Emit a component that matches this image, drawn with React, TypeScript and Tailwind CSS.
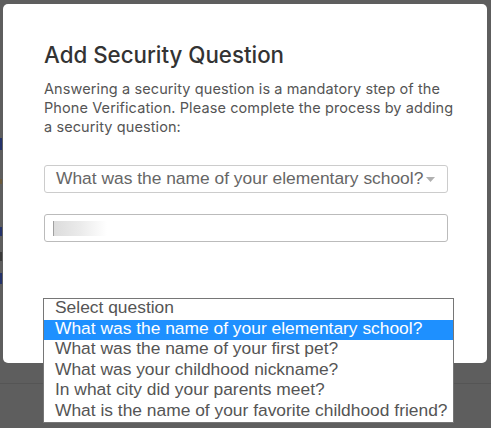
import React from "react";

const options = [
  "Select question",
  "What was the name of your elementary school?",
  "What was the name of your first pet?",
  "What was your childhood nickname?",
  "In what city did your parents meet?",
  "What is the name of your favorite childhood friend?",
];

export default function App() {
  return (
    <div className="relative w-[491px] h-[428px] overflow-hidden bg-[#5e5e5e] flex flex-col">
      <div className="flex pt-[4px]">
        {/* slivers of page content behind the overlay */}
        <div className="w-[3px] flex flex-col">
          <div className="mt-[134px] w-[2px] h-[12px] bg-[#25336a]" />
          <div className="mt-[29px] w-[2px] h-[5px] bg-[#6b5a3a]" />
          <div className="mt-[43px] w-[2px] h-[9px] bg-[#25336a]" />
          <div className="mt-[16px] w-[2px] h-[9px] bg-[#3a3a3a]" />
          <div className="mt-[12px] w-[2px] h-[11px] bg-[#25336a]" />
        </div>
        <div className="w-[484px] bg-white rounded-[5px] h-[359px] pl-[41px] pr-[40px] pt-[37px] font-['Inter',sans-serif]">
          <h2 className="text-[22.3px] leading-[28px] text-[#333333] font-medium">
            Add Security Question
          </h2>
          <p className="mt-[10px] text-[14.5px] leading-[19px] text-[#555555] whitespace-nowrap tracking-[0.1px]">
            Answering a security question is a mandatory step of the
            <br />
            Phone Verification. Please complete the process by adding
            <br />
            a security question:
          </p>

          <div className="mt-[29px] relative h-[28px] w-[404px] border border-[#cccccc] rounded-[3px] flex items-center pl-[11px] pb-[1px] font-['Liberation_Sans',Arial,sans-serif] text-[17.4px] text-[#666666] whitespace-nowrap">
            What was the name of your elementary school?
            <svg
              className="absolute right-[12px] top-[11px]"
              width="9"
              height="5"
              viewBox="0 0 9 5"
            >
              <path d="M0 0 L9 0 L4.5 5 Z" fill="#b0b0b0" />
            </svg>
          </div>

          <div className="mt-[21px] h-[28px] w-[404px] border border-[#bbbbbb] rounded-[3px] flex items-center pl-[8px]">
            <div className="h-[15px] w-[54px] bg-gradient-to-r from-[#dcdcdc] via-[#ebebeb] to-white border-l border-[#a0a0a0]" />
          </div>
        </div>
      </div>
      <div className="mt-[20px] h-px bg-[#555555]" />

      <div className="absolute left-[43px] top-[298px] w-[411px] border border-[#767676] bg-white font-['Liberation_Sans',Arial,sans-serif] text-[17.4px]">
        {options.map((o, i) => (
          <div
            key={o}
            className={
              i === 1
                ? "h-[20.5px] leading-[17px] pl-[11px] bg-[#1e90ff] text-white whitespace-nowrap"
                : "h-[20.5px] leading-[17px] pl-[11px] text-[#555555] whitespace-nowrap"
            }
          >
            {o}
          </div>
        ))}
      </div>
    </div>
  );
}
